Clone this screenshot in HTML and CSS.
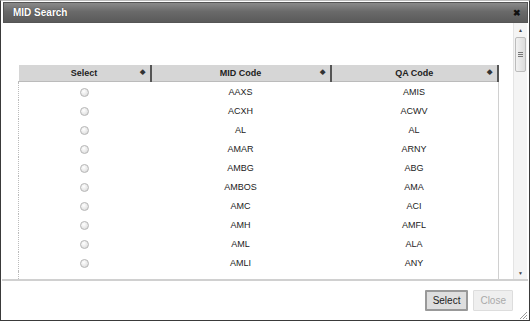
FILE: index.html
```html
<!DOCTYPE html>
<html lang="en">
<head>
    <meta charset="UTF-8">
    <title>MID Search</title>
    <link rel="stylesheet" href="styles.css">
</head>
<body>
    <div class="dialog">
        <div class="titlebar">
            <span class="title">MID Search</span>
            <span class="close-x">&#10006;</span>
        </div>

        <div class="dialog-body">
            <div class="scroll-content">
                <table class="grid">
                    <thead>
                        <tr>
                            <th class="col-select">Select<span class="sort">&#9670;</span></th>
                            <th class="col-mid">MID Code<span class="sort">&#9670;</span></th>
                            <th class="col-qa">QA Code<span class="sort">&#9670;</span></th>
                        </tr>
                    </thead>
                    <tbody>
                        <tr><td><span class="radio"></span></td><td>AAXS</td><td>AMIS</td></tr>
                        <tr><td><span class="radio"></span></td><td>ACXH</td><td>ACWV</td></tr>
                        <tr><td><span class="radio"></span></td><td>AL</td><td>AL</td></tr>
                        <tr><td><span class="radio"></span></td><td>AMAR</td><td>ARNY</td></tr>
                        <tr><td><span class="radio"></span></td><td>AMBG</td><td>ABG</td></tr>
                        <tr><td><span class="radio"></span></td><td>AMBOS</td><td>AMA</td></tr>
                        <tr><td><span class="radio"></span></td><td>AMC</td><td>ACI</td></tr>
                        <tr><td><span class="radio"></span></td><td>AMH</td><td>AMFL</td></tr>
                        <tr><td><span class="radio"></span></td><td>AML</td><td>ALA</td></tr>
                        <tr><td><span class="radio"></span></td><td>AMLI</td><td>ANY</td></tr>
                        <tr class="spacer"><td></td><td></td><td></td></tr>
                    </tbody>
                </table>
            </div>
            <div class="scrollbar">
                <div class="arrow">&#9650;</div>
                <div class="track">
                    <div class="thumb"><span class="grip"></span></div>
                </div>
                <div class="arrow">&#9660;</div>
            </div>
        </div>

        <div class="dialog-footer">
            <button class="btn btn-primary">Select</button>
            <button class="btn btn-disabled">Close</button>
            <span class="resize-grip"></span>
        </div>
    </div>
</body>
</html>
```

FILE: styles.css
```css
* { margin: 0; padding: 0; box-sizing: border-box; }
body { font-family: 'Liberation Sans', Arial, sans-serif; background: #fff; width: 530px; height: 321px; overflow: hidden; }
.dialog { width: 530px; height: 321px; border: 1px solid #3a3a3a; border-top-color: #bbb; background: #fff; display: flex; flex-direction: column; position: relative; }
.titlebar { margin: 1px 1px 0 2px; height: 21px; background: linear-gradient(to bottom, #8a8a8a 0%, #6a6a6a 45%, #5a5a5a 100%); border: 1px solid #555; display: flex; align-items: center; justify-content: space-between; padding: 0 6px 0 9px; }
.title { color: #fff; font-size: 10px; font-weight: 700; text-shadow: 0 0 1px #333; }
.close-x { color: #111; font-size: 9px; font-weight: 700; }
.dialog-body { height: 256px; display: flex; padding-left: 1px; }
.scroll-content { flex: 1; overflow: hidden; padding: 42px 11px 0 16px; }
.grid { width: 481px; border-collapse: collapse; font-size: 9px; color: #222; table-layout: fixed; }
.grid th { background: #d6d6d6; height: 16px; font-weight: 700; font-size: 9px; color: #222; text-align: center; position: relative; border-right: 2px solid #555; border-bottom: 1px solid #bbb; }
.grid th.col-select { width: 132px; }
.grid th.col-mid { width: 180px; }
.sort { position: absolute; right: 5px; top: 3px; font-size: 7px; color: #333; }
.grid td { height: 19px; text-align: center; vertical-align: middle; padding-top: 2px; }
.grid td:first-child { border-left: 1px dotted #bbb; }
.grid td:last-child { border-right: 1px solid #d0d0d0; }
.grid .spacer td { height: 30px; }
.radio { display: inline-block; width: 9px; height: 9px; border-radius: 50%; border: 1px solid #b8b8b8; background: radial-gradient(circle at 40% 35%, #fff 0%, #e6e6e6 60%, #cfcfcf 100%); vertical-align: middle; }
.scrollbar { width: 14px; margin: 0 2px 0 0; padding-top: 2px; display: flex; flex-direction: column; background: #f4f4f4; border-left: 1px solid #e4e4e4; }
.arrow { height: 11px; font-size: 5px; color: #444; text-align: center; line-height: 11px; }
.track { flex: 1; position: relative; }
.thumb { margin: 1px 1px 0 1px; height: 35px; border: 1px solid #bcbcbc; border-radius: 2px; background: linear-gradient(to right, #f2f2f2, #dcdcdc); display: flex; align-items: center; justify-content: center; }
.grip { width: 5px; height: 6px; background: repeating-linear-gradient(to bottom, #777 0, #777 1px, transparent 1px, transparent 2px); }
.dialog-footer { flex: 1; border-top: 2px solid #d0d0d0; margin: 0 1px; display: flex; justify-content: flex-end; align-items: center; gap: 5px; padding: 0 15px 0 0; position: relative; }
.btn { font-family: 'Liberation Sans', Arial, sans-serif; font-size: 10px; height: 21px; padding: 0 6px; border-radius: 1px; }
.btn-primary { color: #222; background: #dedede; border: 2px solid #999; }
.btn-disabled { color: #aaa; background: #efefef; border: 1px solid #ddd; }
.resize-grip { position: absolute; right: 1px; bottom: 1px; width: 8px; height: 8px; background: linear-gradient(135deg, transparent 0 55%, #999 55% 62%, transparent 62% 72%, #999 72% 79%, transparent 79% 89%, #999 89%); }
```
